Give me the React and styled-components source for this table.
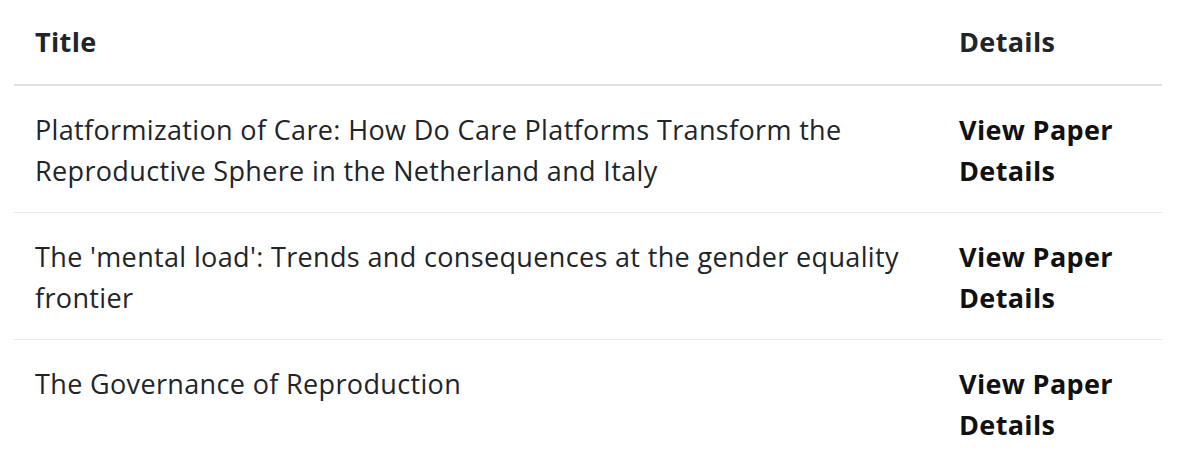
import React from "react";
import styled, { createGlobalStyle } from "styled-components";

const GlobalStyle = createGlobalStyle`
  html, body { margin: 0; padding: 0; background: #fff; }
  body { font-family: "Open Sans", Lato, sans-serif; color: #212529; }
`;

const Wrapper = styled.div`
  padding: 0 38px 0 14px;
`;

const Table = styled.table`
  width: 100%;
  border-collapse: collapse;
  font-size: 27px;
  line-height: 41px;
  letter-spacing: 0.35px;
`;

const HeadCell = styled.th`
  text-align: left;
  font-weight: 700;
  padding: 21px 21px 22px;
  border-bottom: 2px solid #dee2e6;
  width: ${(p) => (p.$narrow ? "182px" : "auto")};
`;

const Row = styled.tr`
  & + & td { border-top: 1px solid #e6e8ea; }
`;

const Cell = styled.td`
  padding: 23px 21px 21px;
  vertical-align: top;
  font-weight: ${(p) => (p.$bold ? 700 : 400)};
  color: ${(p) => (p.$bold ? "#111" : "#212529")};
`;

const papers = [
  "Platformization of Care: How Do Care Platforms Transform the Reproductive Sphere in the Netherland and Italy",
  "The 'mental load': Trends and consequences at the gender equality frontier",
  "The Governance of Reproduction",
];

export default function App() {
  return (
    <>
      <GlobalStyle />
      <Wrapper>
        <Table>
          <thead>
            <tr>
              <HeadCell>Title</HeadCell>
              <HeadCell $narrow>Details</HeadCell>
            </tr>
          </thead>
          <tbody>
            {papers.map((t) => (
              <Row key={t}>
                <Cell>{t}</Cell>
                <Cell $bold>View Paper Details</Cell>
              </Row>
            ))}
          </tbody>
        </Table>
      </Wrapper>
    </>
  );
}
